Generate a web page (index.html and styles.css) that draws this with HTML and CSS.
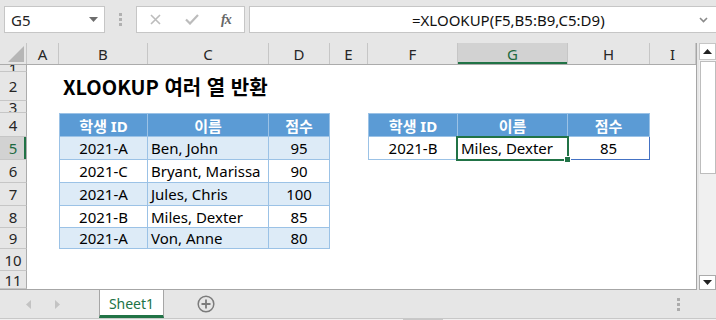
FILE: index.html
```html
<!DOCTYPE html>
<html lang="ko">

<head>
    <meta charset="UTF-8">
    <meta name="viewport" content="width=device-width, initial-scale=1.0">
    <title>XLOOKUP 여러 열 반환</title>
    <link rel="stylesheet" href="styles.css">
</head>

<body>
    <div class="app">
        <div class="toolbar">
            <div class="namebox">
                <span>G5</span>
                <svg width="9" height="5" viewBox="0 0 9 5"><path d="M0 0H9L4.5 5Z" fill="#6d6d6d"/></svg>
            </div>
            <div class="grip">
                <svg width="3" height="13" viewBox="0 0 3 13"><rect x="0" y="0" width="3" height="3" fill="#b1b1b1"/><rect x="0" y="5" width="3" height="3" fill="#b1b1b1"/><rect x="0" y="10" width="3" height="3" fill="#b1b1b1"/></svg>
            </div>
            <div class="fxbtns">
                <svg class="ico-x" width="11" height="11" viewBox="0 0 11 11"><path d="M1 1L10 10M10 1L1 10" stroke="#bcbcbc" stroke-width="1.6"/></svg>
                <svg class="ico-ok" width="14" height="11" viewBox="0 0 14 11"><path d="M1 5.5L5 9.5L13 1" stroke="#bcbcbc" stroke-width="2.2" fill="none"/></svg>
                <span class="fx">fx</span>
            </div>
            <div class="formula">
                <span class="ftext">=XLOOKUP(F5,B5:B9,C5:D9)</span>
                <svg class="chev" width="9" height="6" viewBox="0 0 9 6"><path d="M1 1L4.5 4.5L8 1" stroke="#8a8a8a" stroke-width="1.6" fill="none"/></svg>
            </div>
        </div>

        <div class="sheet">
            <div class="grid">
                <div class="row colhead">
                    <div class="corner"><svg width="16" height="16" viewBox="0 0 16 16"><path d="M16 0V16H0Z" fill="#b6b6b6"/></svg></div>
                    <div class="ch">A</div>
                    <div class="ch">B</div>
                    <div class="ch">C</div>
                    <div class="ch">D</div>
                    <div class="ch">E</div>
                    <div class="ch">F</div>
                    <div class="ch ch-sel">G</div>
                    <div class="ch">H</div>
                    <div class="ch">I</div>
                </div>

                <div class="row r1">
                    <div class="rh">1</div><div></div><div></div><div></div><div></div><div></div><div></div><div></div><div></div><div></div>
                </div>
                <div class="row r2">
                    <div class="rh">2</div><div></div>
                    <div class="title">XLOOKUP 여러 열 반환</div>
                    <div></div><div></div><div></div><div></div><div></div><div></div><div></div>
                </div>
                <div class="row r3">
                    <div class="rh">3</div><div></div><div></div><div></div><div></div><div></div><div></div><div></div><div></div><div></div>
                </div>
                <div class="row r4">
                    <div class="rh">4</div><div></div>
                    <div class="tc tl tt hd ctr">학생 ID</div>
                    <div class="tc tt hd ctr">이름</div>
                    <div class="tc tt hd ctr">점수</div>
                    <div></div>
                    <div class="tc tl tt hd ctr">학생 ID</div>
                    <div class="tc tt hd ctr">이름</div>
                    <div class="tc tt hd ctr">점수</div>
                    <div></div>
                </div>
                <div class="row r5">
                    <div class="rh rh-sel">5</div><div></div>
                    <div class="tc tl ev ctr">2021-A</div>
                    <div class="tc ev lft">Ben, John</div>
                    <div class="tc ev ctr">95</div>
                    <div></div>
                    <div class="tc tl ctr">2021-B</div>
                    <div class="tc lft sel">Miles, Dexter</div>
                    <div class="tc ctr last">85</div>
                    <div></div>
                </div>
                <div class="row r6">
                    <div class="rh">6</div><div></div>
                    <div class="tc tl ctr">2021-C</div>
                    <div class="tc lft">Bryant, Marissa</div>
                    <div class="tc ctr">90</div>
                    <div></div><div></div><div></div><div></div><div></div>
                </div>
                <div class="row r7">
                    <div class="rh">7</div><div></div>
                    <div class="tc tl ev ctr">2021-A</div>
                    <div class="tc ev lft">Jules, Chris</div>
                    <div class="tc ev ctr">100</div>
                    <div></div><div></div><div></div><div></div><div></div>
                </div>
                <div class="row r8">
                    <div class="rh">8</div><div></div>
                    <div class="tc tl ctr">2021-B</div>
                    <div class="tc lft">Miles, Dexter</div>
                    <div class="tc ctr">85</div>
                    <div></div><div></div><div></div><div></div><div></div>
                </div>
                <div class="row r9">
                    <div class="rh">9</div><div></div>
                    <div class="tc tl ev ctr">2021-A</div>
                    <div class="tc ev lft">Von, Anne</div>
                    <div class="tc ev ctr">80</div>
                    <div></div><div></div><div></div><div></div><div></div>
                </div>
                <div class="row r10">
                    <div class="rh">10</div><div></div><div></div><div></div><div></div><div></div><div></div><div></div><div></div><div></div>
                </div>
                <div class="row r11">
                    <div class="rh">11</div><div></div><div></div><div></div><div></div><div></div><div></div><div></div><div></div><div></div>
                </div>
            </div>

            <div class="vscroll">
                <div class="sbtn"><svg width="9" height="5" viewBox="0 0 9 5"><path d="M4.5 0L9 5H0Z" fill="#222"/></svg></div>
                <div class="thumb"></div>
                <div class="track"></div>
                <div class="sbtn down"><svg width="9" height="5" viewBox="0 0 9 5"><path d="M0 0H9L4.5 5Z" fill="#222"/></svg></div>
            </div>
        </div>

        <div class="tabbar">
            <div class="nav">
                <svg width="5" height="9" viewBox="0 0 5 9"><path d="M5 0V9L0 4.5Z" fill="#c3c3c3"/></svg>
                <svg width="5" height="9" viewBox="0 0 5 9"><path d="M0 0V9L5 4.5Z" fill="#c3c3c3"/></svg>
            </div>
            <div class="tab">Sheet1</div>
            <div class="addsheet">
                <svg width="18" height="18" viewBox="0 0 18 18"><circle cx="9" cy="9" r="7.8" stroke="#7b7b7b" stroke-width="1.5" fill="none"/><path d="M9 4.5V13.5M4.5 9H13.5" stroke="#7b7b7b" stroke-width="1.8"/></svg>
            </div>
            <div class="spacer"></div>
            <div class="tdots">
                <svg width="3" height="13" viewBox="0 0 3 13"><rect x="0" y="0" width="3" height="3" fill="#acacac"/><rect x="0" y="5" width="3" height="3" fill="#acacac"/><rect x="0" y="10" width="3" height="3" fill="#acacac"/></svg>
            </div>
        </div>
        <div class="hscroll"><div class="hthumb"></div></div>
    </div>
</body>

</html>
```

FILE: styles.css
```css
* {
    box-sizing: border-box;
}

body {
    margin: 0;
    font-family: "Noto Sans", "Noto Sans CJK KR", sans-serif;
    background-color: #e6e6e6;
    color: #000;
}

.app {
    width: 716px;
    height: 320px;
    overflow: hidden;
    background: #e6e6e6;
}

/* formula bar */
.toolbar {
    height: 43px;
    display: flex;
    align-items: flex-start;
    padding: 6px 0 0 4px;
}

.namebox {
    width: 101px;
    height: 27px;
    background: #fff;
    border: 1px solid #c6c6c6;
    display: flex;
    align-items: center;
    justify-content: space-between;
    padding: 0 6px 0 6px;
    font-size: 15px;
    color: #222;
}

.grip {
    width: 31px;
    height: 27px;
    display: flex;
    align-items: center;
    justify-content: center;
}

.fxbtns {
    width: 109px;
    height: 27px;
    background: #fff;
    border: 1px solid #c6c6c6;
    display: flex;
    align-items: center;
    padding-left: 13px;
}

.ico-x {
    margin-right: 24px;
}

.ico-ok {
    margin-right: 22px;
}

.fx {
    font-family: "Liberation Serif", serif;
    font-style: italic;
    font-weight: bold;
    font-size: 14px;
    color: #666;
    letter-spacing: -1px;
}

.formula {
    flex: 1;
    margin-left: 4px;
    height: 27px;
    background: #fff;
    border: 1px solid #c6c6c6;
    border-right: none;
    display: flex;
    align-items: center;
    padding-left: 162px;
    font-size: 15px;
    color: #111;
}

.ftext {
    flex: 1;
}

.chev {
    margin-right: 8px;
}

/* sheet */
.sheet {
    display: flex;
    height: 247px;
}

.grid {
    width: 697px;
    border-right: 1px solid #a6a6a6;
    border-bottom: 1px solid #a6a6a6;
    background: #fff;
}

.row {
    display: grid;
    grid-template-columns: 27px 32px 89px 121px 61px 38px 90px 110px 82px 46px;
    font-size: 15px;
}

.row > div {
    display: flex;
    align-items: center;
    overflow: hidden;
    white-space: nowrap;
}

.colhead {
    height: 22px;
    background: #e6e6e6;
    border-bottom: 1px solid #ababab;
}

.corner {
    justify-content: flex-end;
    align-items: flex-end !important;
    padding: 0 2px 2px 0;
    border-right: 1px solid #c6c6c6;
}

.ch {
    justify-content: center;
    color: #262626;
    border-right: 1px solid #c6c6c6;
}

.ch-sel {
    background: #d2d2d2;
    color: #1e6a40;
    box-shadow: inset 0 -2px 0 #217346;
}

.rh {
    justify-content: center;
    background: #e6e6e6;
    color: #262626;
    border-right: 1px solid #ababab;
    border-bottom: 1px solid #c6c6c6;
}

.rh-sel {
    background: #d2d2d2;
    color: #1e6a40;
    box-shadow: inset -2px 0 0 #217346;
}

.r1 { height: 7px; }
.r2 { height: 29px; }
.r3 { height: 12px; }
.r4 { height: 24px; }
.r5 { height: 23px; }
.r6 { height: 23px; }
.r7 { height: 23px; }
.r8 { height: 22px; }
.r9 { height: 21px; }
.r10 { height: 22px; }
.r11 { height: 18px; }

.title {
    overflow: visible !important;
    padding-left: 4px;
    font-family: "Noto Sans CJK KR", sans-serif;
    font-weight: bold;
    font-size: 20px;
}

/* data tables */
.tc {
    border-right: 1px solid #9bc2e6;
    border-bottom: 1px solid #9bc2e6;
}

.tl {
    border-left: 1px solid #9bc2e6;
}

.tt {
    border-top: 1px solid #9bc2e6;
}

.hd {
    background: #5b9bd5;
    color: #fff;
    font-weight: bold;
}

.ev {
    background: #ddebf7;
}

.ctr {
    justify-content: center;
}

.lft {
    padding-left: 3px;
}

.last {
    border-right-color: #4472c4;
    border-bottom-color: #4472c4;
}

.sel {
    position: relative;
    overflow: visible !important;
}

.sel::after {
    content: "";
    position: absolute;
    left: -2px;
    top: -1px;
    right: -2px;
    bottom: -2px;
    border: 2px solid #217346;
}

.sel::before {
    content: "";
    position: absolute;
    right: -4px;
    bottom: -4px;
    width: 5px;
    height: 5px;
    background: #217346;
    border: 1px solid #fff;
    z-index: 2;
}

/* vertical scrollbar */
.vscroll {
    width: 17px;
    margin-left: 2px;
    display: flex;
    flex-direction: column;
    background: #f0f0f0;
    height: 247px;
}

.sbtn {
    height: 17px;
    background: #fff;
    border: 1px solid #c6c6c6;
    display: flex;
    align-items: center;
    justify-content: center;
}

.sbtn.down {
    height: 15px;
    border-color: #ababab;
}

.thumb {
    height: 113px;
    margin: 1px 0 0 1px;
    background: #fff;
    border: 1px solid #bdbdbd;
}

.track {
    flex: 1;
}

/* sheet tabs */
.tabbar {
    height: 28px;
    display: flex;
    align-items: stretch;
}

.nav {
    width: 99px;
    display: flex;
    align-items: center;
    padding-left: 26px;
    gap: 24px;
}

.tab {
    width: 65px;
    background: #fff;
    border-left: 1px solid #a6a6a6;
    border-right: 1px solid #a6a6a6;
    border-bottom: 3px solid #217346;
    display: flex;
    align-items: center;
    justify-content: center;
    color: #217346;
    font-size: 14px;
    padding-top: 1px;
}

.addsheet {
    display: flex;
    align-items: center;
    padding-left: 33px;
}

.spacer {
    flex: 1;
}

.tdots {
    display: flex;
    align-items: center;
    padding-right: 36px;
}

.hscroll {
    height: 2px;
    border-top: 1px solid #c8c8c8;
    background: #f0f0f0;
    position: relative;
}

.hthumb {
    margin-left: 403px;
    width: 40px;
    height: 1px;
    background: #c8c8c8;
}
```
